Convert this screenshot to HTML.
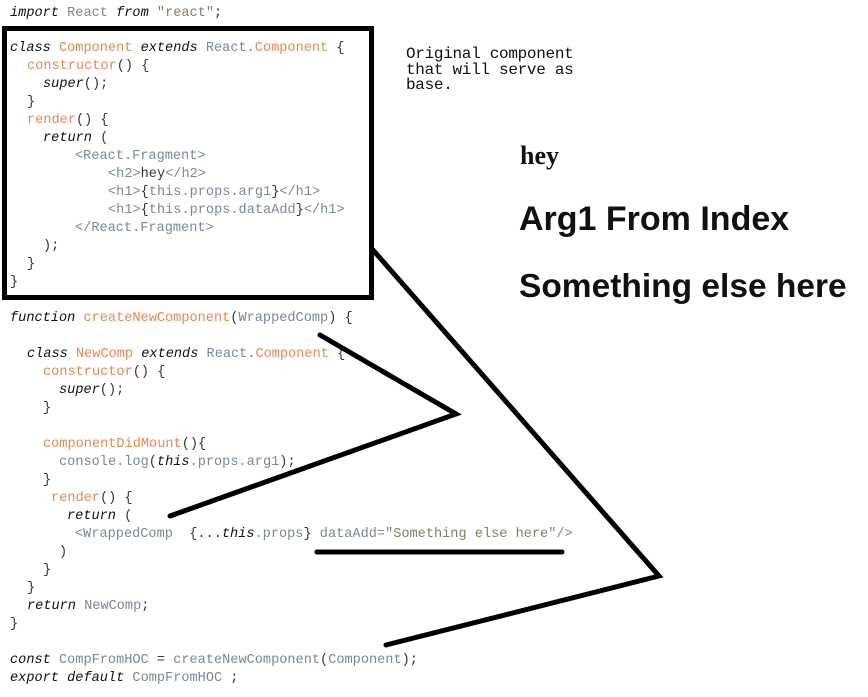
<!DOCTYPE html>
<html><head><meta charset="utf-8"><style>
body{margin:0;width:868px;height:697px;background:#fff;position:relative;overflow:hidden}
.l{position:absolute;font-family:"Liberation Mono",monospace;font-size:13.6px;line-height:18px;white-space:pre;color:#333;margin-top:2px}
.k{font-style:italic;color:#111}
.o{color:#e08a55}
.g{color:#7a8796}
.s{color:#8a7a6a}
.r{position:absolute;font-family:"Liberation Sans",sans-serif;font-weight:bold;color:#111;white-space:pre}
</style></head><body>
<div class="l" style="left:10px;top:3px"><span class="k">import</span> <span class="g">React</span> <span class="k">from</span> <span class="s">"react"</span>;</div>
<div style="position:absolute;left:2px;top:26px;width:362px;height:264px;border:5px solid #000"></div>
<div class="l" style="left:10px;top:38px"><span class="k">class</span> <span class="o">Component</span> <span class="k">extends</span> <span class="g">React.</span><span class="o">Component</span> {</div>
<div class="l" style="left:27px;top:56px"><span class="o">constructor</span>() {</div>
<div class="l" style="left:43px;top:74px"><span class="k">super</span>();</div>
<div class="l" style="left:27px;top:92px">}</div>
<div class="l" style="left:27px;top:110px"><span class="o">render</span>() {</div>
<div class="l" style="left:43px;top:128px"><span class="k">return</span> (</div>
<div class="l" style="left:75px;top:146px"><span class="g">&lt;React.Fragment&gt;</span></div>
<div class="l" style="left:108px;top:164px"><span class="g">&lt;h2&gt;</span>hey<span class="g">&lt;/h2&gt;</span></div>
<div class="l" style="left:108px;top:182px"><span class="g">&lt;h1&gt;</span>{<span class="g">this.props.arg1</span>}<span class="g">&lt;/h1&gt;</span></div>
<div class="l" style="left:108px;top:200px"><span class="g">&lt;h1&gt;</span>{<span class="g">this.props.dataAdd</span>}<span class="g">&lt;/h1&gt;</span></div>
<div class="l" style="left:75px;top:218px"><span class="g">&lt;/React.Fragment&gt;</span></div>
<div class="l" style="left:43px;top:236px">);</div>
<div class="l" style="left:27px;top:254px">}</div>
<div class="l" style="left:10px;top:272px">}</div>

<div class="l" style="left:10px;top:308px"><span class="k">function</span> <span class="o">createNewComponent</span>(<span class="g">WrappedComp</span>) {</div>
<div class="l" style="left:27px;top:344px"><span class="k">class</span> <span class="o">NewComp</span> <span class="k">extends</span> <span class="g">React.</span><span class="o">Component</span> {</div>
<div class="l" style="left:43px;top:362px"><span class="o">constructor</span>() {</div>
<div class="l" style="left:59px;top:380px"><span class="k">super</span>();</div>
<div class="l" style="left:43px;top:398px">}</div>
<div class="l" style="left:43px;top:434px"><span class="o">componentDidMount</span>(){</div>
<div class="l" style="left:59px;top:452px"><span class="g">console.log</span>(<span class="k">this</span><span class="g">.props.arg1</span>);</div>
<div class="l" style="left:43px;top:470px">}</div>
<div class="l" style="left:51px;top:488px"><span class="o">render</span>() {</div>
<div class="l" style="left:67px;top:506px"><span class="k">return</span> (</div>
<div class="l" style="left:75px;top:524px"><span class="g">&lt;WrappedComp</span>  {...<span class="k">this</span><span class="g">.props</span>} <span class="g">dataAdd=</span><span class="s">"Something else here"</span><span class="g">/&gt;</span></div>
<div class="l" style="left:59px;top:542px">)</div>
<div class="l" style="left:43px;top:560px">}</div>
<div class="l" style="left:27px;top:578px">}</div>
<div class="l" style="left:27px;top:596px"><span class="k">return</span> <span class="g">NewComp</span>;</div>
<div class="l" style="left:10px;top:614px">}</div>
<div class="l" style="left:10px;top:650px"><span class="k">const</span> <span class="g">CompFromHOC</span> = <span class="g">createNewComponent</span>(<span class="g">Component</span>);</div>
<div class="l" style="left:10px;top:668px"><span class="k">export</span> <span class="k">default</span> <span class="g">CompFromHOC</span> ;</div>

<div class="l" style="left:406px;top:45px;font-size:16px;line-height:15.5px;color:#111;letter-spacing:-0.3px">Original component
that will serve as
base.</div>
<div class="r" style="left:520px;top:141px;font-family:'Liberation Serif',serif;font-size:26px">hey</div>
<div class="r" style="left:519px;top:200px;font-size:34px">Arg1 From Index</div>
<div class="r" style="left:519px;top:268px;font-size:33.5px">Something else here</div>

<svg style="position:absolute;left:0;top:0" width="868" height="697">
<g stroke="#000" stroke-width="5" fill="none" stroke-linecap="round" stroke-linejoin="miter">
<polyline points="373,250 659,576 386,645"/>
<polyline points="320,335 456,414 170,516"/>
<line x1="317" y1="552" x2="562" y2="552"/>
</g>
</svg>
</body></html>
